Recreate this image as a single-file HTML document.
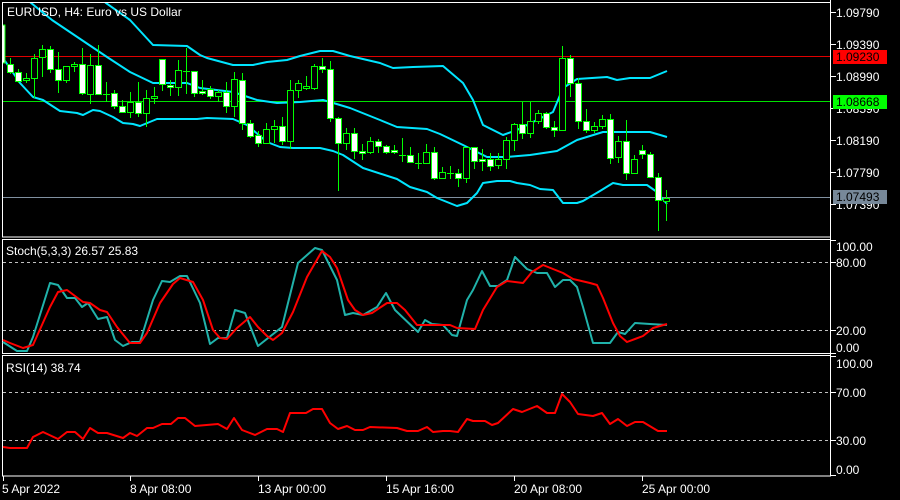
<!DOCTYPE html>
<html><head><meta charset="utf-8"><style>
html,body{margin:0;padding:0;background:#000;width:900px;height:500px;overflow:hidden}
svg{display:block}
text{font-family:"Liberation Sans",sans-serif;font-size:12px;fill:#fff}
</style></head><body>
<svg width="900" height="500" viewBox="0 0 900 500" xmlns="http://www.w3.org/2000/svg">
<defs><clipPath id="cm"><rect x="3" y="3" width="827" height="234"/></clipPath></defs>
<rect width="900" height="500" fill="#000"/>
<!-- panel borders -->
<rect x="2.5" y="2.5" width="828" height="234.5" fill="none" stroke="#fff"/>
<rect x="2.5" y="239.5" width="828" height="114" fill="none" stroke="#fff"/>
<rect x="2.5" y="355.5" width="828" height="120.5" fill="none" stroke="#fff"/>
<line x1="830.5" y1="476" x2="830.5" y2="0" stroke="#fff"/>
<!-- level lines main -->
<line x1="3" y1="56.5" x2="830" y2="56.5" stroke="#e00000"/>
<line x1="3" y1="101.5" x2="830" y2="101.5" stroke="#00e000"/>
<line x1="3" y1="197.5" x2="830" y2="197.5" stroke="#8090a0"/>
<g clip-path="url(#cm)" fill="none" stroke="#00e5ff" stroke-width="2" stroke-linejoin="round">
<polyline points="100,-2 106,3 130,20 153,45 187,46 200,55 207,58 233,65 253,65 267,62 287,60 300,56 320,51 333,51 350,56 380,63 393,68 413,67 443,66 463,83 473,100 483,125 503,135 517,130 537,120 553,112 563,88 577,79 607,77 617,80 630,78 650,78 667,71"/>
<polyline points="25,-2 52,20 107,57 130,72 153,83 187,83 200,88 233,92 257,100 277,103 300,102 323,100 330,102 350,108 380,120 397,127 427,129 440,134 463,145 487,157 507,157 530,155 557,151 577,140 603,132 650,132 667,137"/>
<polyline points="3,58 20,83 33,97 43,100 60,111 77,113 83,115 93,110 100,111 113,117 123,123 133,124 140,126 157,119 197,119 207,118 233,119 247,125 267,142 280,147 293,148 320,148 333,151 343,155 363,168 397,179 410,187 427,192 437,198 457,206 467,203 477,193 483,183 497,181 510,181 517,183 530,185 540,189 553,190 563,203 577,203 583,201 600,191 613,183 623,185 647,185 657,192 667,204"/>
</g>
<g clip-path="url(#cm)" stroke="#00ff00" stroke-width="1">
<rect x="2" y="25" width="3" height="38" fill="#fff"/>
<line x1="10.5" y1="58" x2="10.5" y2="74"/><rect x="7.5" y="64.5" width="6" height="8" fill="#fff"/>
<line x1="18.5" y1="69" x2="18.5" y2="83"/><rect x="15.5" y="72.5" width="6" height="9" fill="#fff"/>
<line x1="26.5" y1="73" x2="26.5" y2="83"/><rect x="23.5" y="78.5" width="6" height="2" fill="#000"/>
<line x1="34.5" y1="54" x2="34.5" y2="98"/><rect x="31.5" y="58.5" width="6" height="20" fill="#000"/>
<line x1="42.5" y1="45" x2="42.5" y2="77"/><rect x="39.5" y="49.5" width="6" height="8" fill="#000"/>
<line x1="50.5" y1="46" x2="50.5" y2="73"/><rect x="47.5" y="49.5" width="6" height="20" fill="#fff"/>
<line x1="58.5" y1="52" x2="58.5" y2="93"/><rect x="55.5" y="69.5" width="6" height="11" fill="#fff"/>
<line x1="66.5" y1="66" x2="66.5" y2="83"/><rect x="63.5" y="66.5" width="6" height="14" fill="#000"/>
<line x1="74.5" y1="62" x2="74.5" y2="72"/><rect x="71.5" y="64.5" width="6" height="2" fill="#000"/>
<line x1="82.5" y1="48" x2="82.5" y2="95"/><rect x="79.5" y="64.5" width="6" height="29" fill="#fff"/>
<line x1="90.5" y1="54" x2="90.5" y2="104"/><rect x="87.5" y="65.5" width="6" height="29" fill="#000"/>
<line x1="98.5" y1="45" x2="98.5" y2="95"/><rect x="95.5" y="65.5" width="6" height="29" fill="#fff"/>
<line x1="106.5" y1="82" x2="106.5" y2="102"/><line x1="103" y1="94.5" x2="110" y2="94.5"/>
<line x1="114.5" y1="90" x2="114.5" y2="109"/><rect x="111.5" y="93.5" width="6" height="13" fill="#fff"/>
<line x1="122.5" y1="100" x2="122.5" y2="112"/><rect x="119.5" y="106.5" width="6" height="6" fill="#fff"/>
<line x1="130.5" y1="92" x2="130.5" y2="118"/><rect x="127.5" y="102.5" width="6" height="10" fill="#000"/>
<line x1="138.5" y1="82" x2="138.5" y2="117"/><rect x="135.5" y="102.5" width="6" height="11" fill="#fff"/>
<line x1="146.5" y1="90" x2="146.5" y2="127"/><rect x="143.5" y="98.5" width="6" height="15" fill="#000"/>
<line x1="154.5" y1="87" x2="154.5" y2="104"/><rect x="151.5" y="96.5" width="6" height="2" fill="#000"/>
<line x1="162.5" y1="59" x2="162.5" y2="91"/><rect x="159.5" y="59.5" width="6" height="25" fill="#fff"/>
<line x1="170.5" y1="80" x2="170.5" y2="96"/><rect x="167.5" y="85.5" width="6" height="2" fill="#fff"/>
<line x1="178.5" y1="60" x2="178.5" y2="96"/><rect x="175.5" y="70.5" width="6" height="17" fill="#000"/>
<line x1="186.5" y1="48" x2="186.5" y2="94"/><line x1="183" y1="71.5" x2="190" y2="71.5"/>
<line x1="194.5" y1="71" x2="194.5" y2="97"/><rect x="191.5" y="71.5" width="6" height="22" fill="#fff"/>
<line x1="202.5" y1="80" x2="202.5" y2="95"/><rect x="199.5" y="91.5" width="6" height="2" fill="#fff"/>
<line x1="210.5" y1="86" x2="210.5" y2="99"/><rect x="207.5" y="89.5" width="6" height="7" fill="#fff"/>
<line x1="218.5" y1="90" x2="218.5" y2="102"/><rect x="215.5" y="92.5" width="6" height="4" fill="#000"/>
<line x1="226.5" y1="82" x2="226.5" y2="113"/><rect x="223.5" y="92.5" width="6" height="14" fill="#fff"/>
<line x1="234.5" y1="72" x2="234.5" y2="117"/><rect x="231.5" y="79.5" width="6" height="27" fill="#000"/>
<line x1="242.5" y1="73" x2="242.5" y2="130"/><rect x="239.5" y="80.5" width="6" height="43" fill="#fff"/>
<line x1="250.5" y1="120" x2="250.5" y2="138"/><rect x="247.5" y="123.5" width="6" height="13" fill="#fff"/>
<line x1="258.5" y1="131" x2="258.5" y2="147"/><rect x="255.5" y="135.5" width="6" height="8" fill="#fff"/>
<line x1="266.5" y1="123" x2="266.5" y2="143"/><rect x="263.5" y="129.5" width="6" height="14" fill="#000"/>
<line x1="274.5" y1="120" x2="274.5" y2="143"/><rect x="271.5" y="126.5" width="6" height="3" fill="#000"/>
<line x1="282.5" y1="117" x2="282.5" y2="145"/><rect x="279.5" y="126.5" width="6" height="15" fill="#fff"/>
<line x1="290.5" y1="80" x2="290.5" y2="149"/><rect x="287.5" y="90.5" width="6" height="51" fill="#000"/>
<line x1="298.5" y1="80" x2="298.5" y2="98"/><rect x="295.5" y="83.5" width="6" height="7" fill="#000"/>
<line x1="306.5" y1="76" x2="306.5" y2="90"/><rect x="303.5" y="86.5" width="6" height="2" fill="#000"/>
<line x1="314.5" y1="64" x2="314.5" y2="90"/><rect x="311.5" y="66.5" width="6" height="22" fill="#000"/>
<line x1="322.5" y1="58" x2="322.5" y2="73"/><rect x="319.5" y="66.5" width="6" height="3" fill="#fff"/>
<line x1="330.5" y1="61" x2="330.5" y2="122"/><rect x="327.5" y="69.5" width="6" height="49" fill="#fff"/>
<line x1="338.5" y1="117" x2="338.5" y2="191"/><rect x="335.5" y="118.5" width="6" height="25" fill="#fff"/>
<line x1="346.5" y1="128" x2="346.5" y2="150"/><rect x="343.5" y="133.5" width="6" height="10" fill="#000"/>
<line x1="354.5" y1="128" x2="354.5" y2="159"/><rect x="351.5" y="133.5" width="6" height="18" fill="#fff"/>
<line x1="362.5" y1="144" x2="362.5" y2="160"/><rect x="359.5" y="151.5" width="6" height="2" fill="#fff"/>
<line x1="370.5" y1="137" x2="370.5" y2="154"/><rect x="367.5" y="141.5" width="6" height="11" fill="#000"/>
<line x1="378.5" y1="139" x2="378.5" y2="153"/><rect x="375.5" y="141.5" width="6" height="5" fill="#fff"/>
<line x1="386.5" y1="145" x2="386.5" y2="154"/><rect x="383.5" y="146.5" width="6" height="6" fill="#fff"/>
<line x1="394.5" y1="145" x2="394.5" y2="154"/><rect x="391.5" y="150.5" width="6" height="2" fill="#fff"/>
<line x1="402.5" y1="138" x2="402.5" y2="162"/><line x1="399" y1="155.5" x2="406" y2="155.5"/>
<line x1="410.5" y1="147" x2="410.5" y2="163"/><rect x="407.5" y="155.5" width="6" height="7" fill="#fff"/>
<line x1="418.5" y1="153" x2="418.5" y2="169"/><line x1="415" y1="163.5" x2="422" y2="163.5"/>
<line x1="426.5" y1="144" x2="426.5" y2="164"/><rect x="423.5" y="152.5" width="6" height="11" fill="#000"/>
<line x1="434.5" y1="147" x2="434.5" y2="180"/><rect x="431.5" y="152.5" width="6" height="26" fill="#fff"/>
<line x1="442.5" y1="167" x2="442.5" y2="179"/><rect x="439.5" y="172.5" width="6" height="6" fill="#000"/>
<line x1="450.5" y1="166" x2="450.5" y2="179"/><line x1="447" y1="173.5" x2="454" y2="173.5"/>
<line x1="458.5" y1="169" x2="458.5" y2="187"/><rect x="455.5" y="173.5" width="6" height="5" fill="#fff"/>
<line x1="466.5" y1="147" x2="466.5" y2="183"/><rect x="463.5" y="147.5" width="6" height="31" fill="#000"/>
<line x1="474.5" y1="147" x2="474.5" y2="169"/><rect x="471.5" y="147.5" width="6" height="14" fill="#fff"/>
<line x1="482.5" y1="149" x2="482.5" y2="171"/><rect x="479.5" y="159.5" width="6" height="2" fill="#fff"/>
<line x1="490.5" y1="153" x2="490.5" y2="171"/><rect x="487.5" y="159.5" width="6" height="7" fill="#fff"/>
<line x1="498.5" y1="153" x2="498.5" y2="169"/><rect x="495.5" y="159.5" width="6" height="6" fill="#000"/>
<line x1="506.5" y1="137" x2="506.5" y2="169"/><rect x="503.5" y="140.5" width="6" height="19" fill="#000"/>
<line x1="514.5" y1="123" x2="514.5" y2="151"/><rect x="511.5" y="124.5" width="6" height="16" fill="#000"/>
<line x1="522.5" y1="102" x2="522.5" y2="139"/><rect x="519.5" y="124.5" width="6" height="9" fill="#fff"/>
<line x1="530.5" y1="102" x2="530.5" y2="138"/><rect x="527.5" y="121.5" width="6" height="12" fill="#000"/>
<line x1="538.5" y1="110" x2="538.5" y2="124"/><rect x="535.5" y="113.5" width="6" height="8" fill="#000"/>
<line x1="546.5" y1="112" x2="546.5" y2="129"/><rect x="543.5" y="113.5" width="6" height="14" fill="#fff"/>
<line x1="554.5" y1="121" x2="554.5" y2="137"/><rect x="551.5" y="127.5" width="6" height="3" fill="#fff"/>
<line x1="562.5" y1="46" x2="562.5" y2="130"/><rect x="559.5" y="58.5" width="6" height="72" fill="#000"/>
<line x1="570.5" y1="55" x2="570.5" y2="97"/><rect x="567.5" y="58.5" width="6" height="25" fill="#fff"/>
<line x1="578.5" y1="78" x2="578.5" y2="129"/><rect x="575.5" y="83.5" width="6" height="38" fill="#fff"/>
<line x1="586.5" y1="109" x2="586.5" y2="133"/><rect x="583.5" y="121.5" width="6" height="9" fill="#fff"/>
<line x1="594.5" y1="122" x2="594.5" y2="133"/><rect x="591.5" y="126.5" width="6" height="4" fill="#000"/>
<line x1="602.5" y1="115" x2="602.5" y2="129"/><rect x="599.5" y="119.5" width="6" height="7" fill="#000"/>
<line x1="610.5" y1="114" x2="610.5" y2="164"/><rect x="607.5" y="119.5" width="6" height="39" fill="#fff"/>
<line x1="618.5" y1="136" x2="618.5" y2="163"/><rect x="615.5" y="141.5" width="6" height="16" fill="#000"/>
<line x1="626.5" y1="120" x2="626.5" y2="180"/><rect x="623.5" y="141.5" width="6" height="32" fill="#fff"/>
<line x1="634.5" y1="155" x2="634.5" y2="173"/><rect x="631.5" y="159.5" width="6" height="14" fill="#000"/>
<line x1="642.5" y1="145" x2="642.5" y2="159"/><rect x="639.5" y="150.5" width="6" height="4" fill="#fff"/>
<line x1="650.5" y1="152" x2="650.5" y2="178"/><rect x="647.5" y="154.5" width="6" height="23" fill="#fff"/>
<line x1="658.5" y1="173" x2="658.5" y2="231"/><rect x="655.5" y="177.5" width="6" height="23" fill="#fff"/>
<line x1="666.5" y1="190" x2="666.5" y2="221"/><rect x="663.5" y="198.5" width="6" height="3" fill="#000"/>
</g>
<!-- stoch levels -->
<g stroke="#c0c0c0" stroke-dasharray="3,3">
<line x1="3" y1="262.5" x2="830" y2="262.5"/><line x1="3" y1="330.5" x2="830" y2="330.5"/>
<line x1="3" y1="392.5" x2="830" y2="392.5"/><line x1="3" y1="440.5" x2="830" y2="440.5"/>
</g>
<g fill="none" stroke-width="2" stroke-linejoin="round">
<polyline stroke="#20b2aa" points="3,342 17,351 27,351 33,337 50,283 58,285 67,298 75,298 82,307 88,303 98,319 107,317 115,340 123,346 132,342 140,342 153,300 162,281 170,282 180,276 187,276 200,303 210,344 218,338 227,338 235,310 245,313 258,346 282,327 298,263 315,248 322,250 337,280 345,315 353,313 363,315 377,307 386,293 395,310 418,332 425,320 432,324 443,325 452,335 457,336 467,300 473,290 482,271 490,286 498,286 507,280 515,257 527,269 537,273 547,273 555,287 563,280 570,280 577,287 583,307 593,343 610,343 618,332 625,334 635,323 650,324 667,325"/>
<polyline stroke="#ff0000" points="3,340 10,343 23,348 33,345 50,307 58,292 67,290 83,302 90,303 100,310 107,312 117,327 130,343 140,343 147,333 160,303 173,284 180,278 193,282 203,300 213,330 220,338 227,339 237,328 250,317 258,327 267,336 273,340 282,333 293,312 307,277 322,251 330,257 337,268 348,300 355,310 363,315 372,313 387,303 397,303 405,310 417,325 450,325 457,328 475,329 483,310 497,287 507,281 523,283 532,272 543,265 553,269 563,273 573,279 590,283 597,285 603,298 613,323 620,336 627,342 643,336 653,328 667,324"/>
<polyline stroke="#ff0000" points="3,447 10,448 27,448 33,437 43,432 58,439 67,432 75,432 83,439 90,428 98,433 107,433 123,438 130,433 137,436 147,428 153,428 162,424 171,424 178,418 185,418 195,426 218,424 227,429 234,418 242,430 255,435 267,429 277,429 283,432 290,413 298,413 306,413 313,409 322,409 330,423 338,429 347,426 355,430 363,430 370,427 397,428 407,431 418,431 427,427 433,432 443,431 450,431 458,432 467,419 473,421 485,421 492,425 498,423 513,409 522,412 537,406 547,413 555,413 562,394 570,402 578,414 593,416 602,413 610,424 618,419 627,426 635,422 643,422 658,431 667,431"/>
</g>
<!-- right axis ticks -->
<g stroke="#fff">
<line x1="831" y1="12.5" x2="836" y2="12.5"/><line x1="831" y1="44.5" x2="836" y2="44.5"/><line x1="831" y1="76.5" x2="836" y2="76.5"/><line x1="831" y1="108.5" x2="836" y2="108.5"/><line x1="831" y1="140.5" x2="836" y2="140.5"/><line x1="831" y1="172.5" x2="836" y2="172.5"/><line x1="831" y1="204.5" x2="836" y2="204.5"/>
<line x1="831" y1="240.5" x2="836" y2="240.5"/><line x1="831" y1="262.5" x2="836" y2="262.5"/><line x1="831" y1="330.5" x2="836" y2="330.5"/><line x1="831" y1="353.5" x2="836" y2="353.5"/>
<line x1="831" y1="356.5" x2="836" y2="356.5"/><line x1="831" y1="392.5" x2="836" y2="392.5"/><line x1="831" y1="440.5" x2="836" y2="440.5"/><line x1="831" y1="475.5" x2="836" y2="475.5"/>
<line x1="3.5" y1="476" x2="3.5" y2="481"/><line x1="130.5" y1="476" x2="130.5" y2="481"/><line x1="258.5" y1="476" x2="258.5" y2="481"/><line x1="386.5" y1="476" x2="386.5" y2="481"/><line x1="514.5" y1="476" x2="514.5" y2="481"/><line x1="642.5" y1="476" x2="642.5" y2="481"/>
</g>
<g>
<text x="836" y="17">1.09790</text>
<text x="836" y="49">1.09390</text>
<text x="836" y="81">1.08990</text>
<text x="836" y="113">1.08590</text>
<text x="836" y="145">1.08190</text>
<text x="836" y="177">1.07790</text>
<text x="836" y="209">1.07390</text>
<rect x="833" y="50" width="54" height="14" fill="#ff0000"/><text x="836" y="61" fill="#000" style="fill:#000">1.09230</text>
<rect x="833" y="95" width="54" height="14" fill="#00ff00"/><text x="836" y="106" style="fill:#000">1.08668</text>
<rect x="833" y="190" width="54" height="14" fill="#778899"/><text x="836" y="201" style="fill:#000">1.07493</text>
<text x="836" y="251">100.00</text>
<text x="836" y="267">80.00</text>
<text x="836" y="335">20.00</text>
<text x="836" y="352">0.00</text>
<text x="836" y="368">100.00</text>
<text x="836" y="397">70.00</text>
<text x="836" y="445">30.00</text>
<text x="836" y="474">0.00</text>
<text x="7" y="16">EURUSD, H4:  Euro vs US Dollar</text>
<text x="6" y="255">Stoch(5,3,3) 26.57 25.83</text>
<text x="6" y="372">RSI(14) 38.74</text>
<text x="2" y="493">5 Apr 2022</text>
<text x="130" y="493">8 Apr 08:00</text>
<text x="258" y="493">13 Apr 00:00</text>
<text x="386" y="493">15 Apr 16:00</text>
<text x="514" y="493">20 Apr 08:00</text>
<text x="642" y="493">25 Apr 00:00</text>
</g>
</svg>
</body></html>
